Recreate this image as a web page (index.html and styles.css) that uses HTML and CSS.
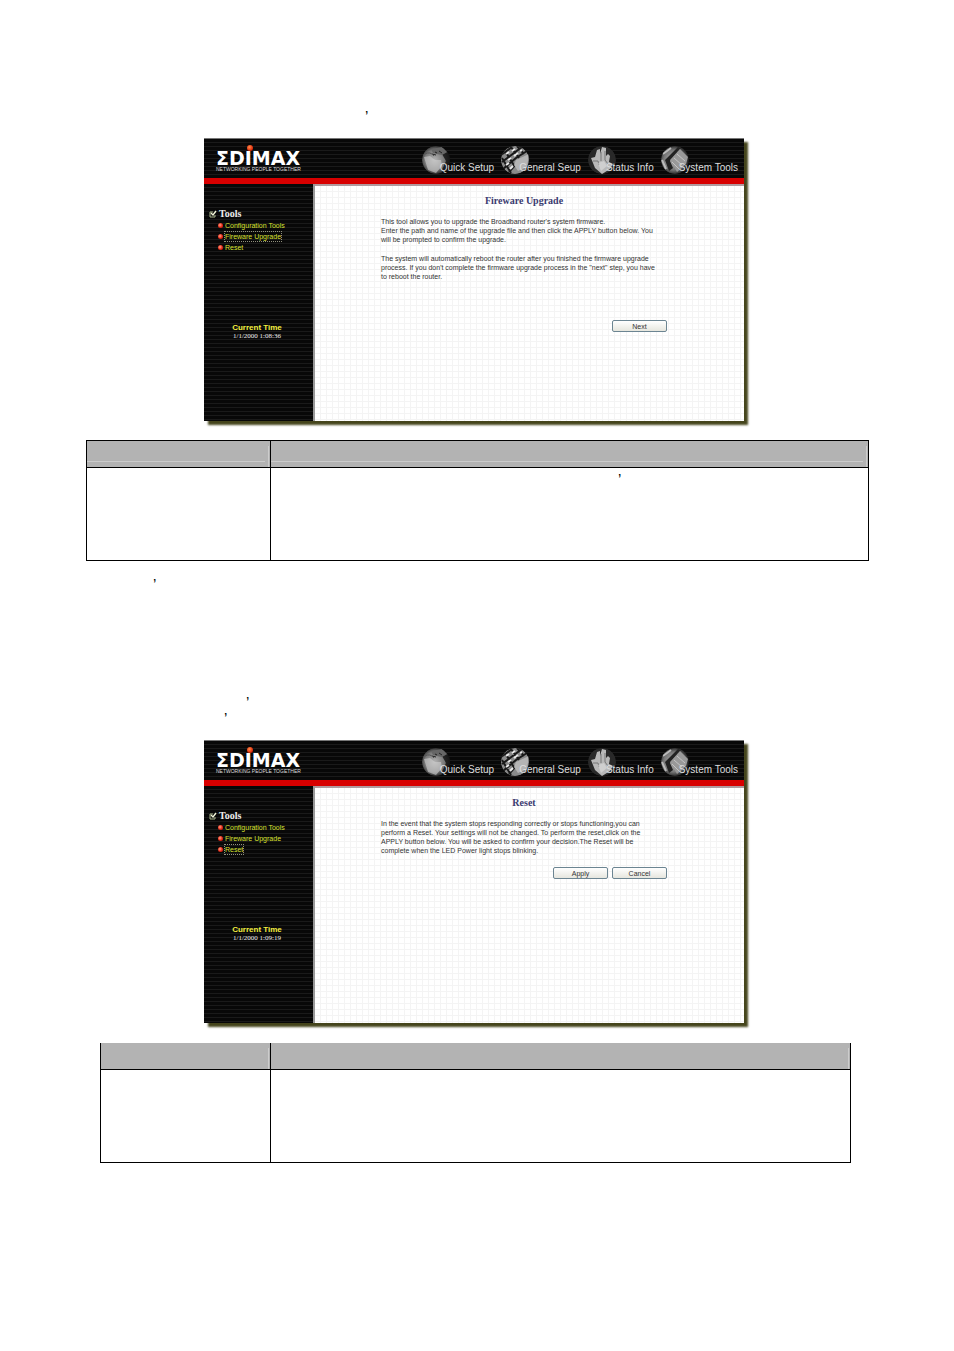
FILE: index.html
```html
<!DOCTYPE html>
<html lang="en">
  <head>
    <meta charset="UTF-8" />
    <meta name="viewport" content="width=device-width, initial-scale=1.0" />
    <title>Fireware Upgrade and Reset</title>
    <link rel="stylesheet" href="styles.css">
  </head>
  <body>
    <!-- shared drawings -->
    <svg class="defs" width="0" height="0" aria-hidden="true">
      <defs>
        <radialGradient id="ball" cx="45%" cy="50%" r="55%">
          <stop offset="0" stop-color="#b4b4b4" />
          <stop offset="0.65" stop-color="#777" />
          <stop offset="1" stop-color="#161616" />
        </radialGradient>
        <clipPath id="ball-clip"><circle cx="14" cy="14" r="14" /></clipPath>
      </defs>
      <symbol id="icon-quick" viewBox="0 0 28 28">
        <g clip-path="url(#ball-clip)">
          <circle cx="14" cy="14" r="14" fill="url(#ball)" />
          <path d="M20 8L28 6L28 28L20 24L24 15Z" fill="#161616" opacity="0.85" />
          <path d="M9 3L20 1L25 6L20 9L15 8L11 7Z" fill="#666" />
          <path d="M13 6L15 7M17 5L20 7M10 8L14 9" stroke="#222" fill="none" />
          <path d="M2 11L8 10L13 14L19 14L20 20L14 27L6 24Z" fill="#d0d0d0" opacity="0.6" />
          <path d="M3 8Q8 5 12 10" stroke="#555" fill="none" />
        </g>
      </symbol>
      <symbol id="icon-general" viewBox="0 0 28 28">
        <g clip-path="url(#ball-clip)">
          <circle cx="14" cy="14" r="14" fill="#8a8a8a" />
          <path d="M0 9L11 1M1 16L21 1M2 23L15 12L26 5M8 26L15 18M4 5L14 21M10 1L18 12M16 0L23 8M1 12L10 27" stroke="#181818" stroke-width="2" fill="none" />
          <path d="M5 8L8 6M11 5L14 3M7 14L10 12M13 10L17 7M5 19L8 17M9 23L12 20M19 5L21 4" stroke="#e8e8e8" stroke-width="2" />
          <path d="M15 14L28 8L26 21L17 25L13 19Z" fill="#b4b4b4" />
        </g>
      </symbol>
      <symbol id="icon-status" viewBox="0 0 28 28">
        <g clip-path="url(#ball-clip)">
          <circle cx="14" cy="14" r="14" fill="#292929" />
          <path d="M5 17L3 12L7 11L9 4L12 3L12 8L14 1L18 2L18 10L20 8L22 10L21 16L25 18L22 23L14 28L7 22Z" fill="#b8b8b8" />
          <path d="M5 15L10 15L11 19M13 6L13 15M17 5L17 14L20 18" stroke="#777" fill="none" />
          <path d="M10 17L16 15L19 20L13 25Z" fill="#ddd" opacity="0.6" />
        </g>
      </symbol>
      <symbol id="icon-system" viewBox="0 0 28 28">
        <g clip-path="url(#ball-clip)">
          <circle cx="14" cy="14" r="14" fill="url(#ball)" />
          <path d="M4 14L17 1L20 2L9 15L12 22L8 25Z" fill="#222" />
          <path d="M9 14L19 3L27 11L25 18L16 26Z" fill="#999" />
          <path d="M13 12L21 19M16 8L24 15M11 16L18 23" stroke="#c4c4c4" />
          <path d="M2 8L10 2M1 14L5 23" stroke="#bbb" stroke-width="2" />
        </g>
      </symbol>
      <symbol id="check" viewBox="0 0 8 8">
        <path d="M6 5V7H1V2H4" fill="none" stroke="#a9b68c" />
        <path d="M2 3L4 5L7 1" fill="none" stroke="#f1f6d8" stroke-width="1.400" />
      </symbol>
    </svg>

    <main class="page">
      <p class="note note-upgrade">’</p>

      <section class="screen">
        <header class="banner">
          <div class="logo">
            <i class="logo-dot"></i>
            <span class="logo-name">ΣDIMAX</span>
            <span class="logo-tag">NETWORKING PEOPLE TOGETHER</span>
          </div>
          <nav class="top-nav">
            <a href="#"><svg><use href="#icon-quick" /></svg><span>Quick Setup</span></a>
            <a href="#"><svg><use href="#icon-general" /></svg><span>General Seup</span></a>
            <a href="#"><svg><use href="#icon-status" /></svg><span>Status Info</span></a>
            <a href="#"><svg><use href="#icon-system" /></svg><span>System Tools</span></a>
          </nav>
        </header>
        <div class="columns">
          <aside class="sidebar">
            <h2><svg><use href="#check" /></svg>Tools</h2>
            <ul>
              <li><a href="#">Configuration Tools</a></li>
              <li><a href="#" class="current">Fireware Upgrade</a></li>
              <li><a href="#">Reset</a></li>
            </ul>
            <div class="clock">
              <strong>Current Time</strong>
              <time>1/1/2000 1:08:36</time>
            </div>
          </aside>
          <div class="content">
            <h1>Fireware Upgrade</h1>
            <p>This tool allows you to upgrade the Broadband router's system firmware.<br>
              Enter the path and name of the upgrade file and then click the APPLY button below. You<br>
              will be prompted to confirm the upgrade.</p>
            <p>The system will automatically reboot the router after you finished the firmware upgrade<br>
              process. If you don't complete the firmware upgrade process in the "next" step, you have<br>
              to reboot the router.</p>
            <div class="buttons buttons-low">
              <button type="button">Next</button>
            </div>
          </div>
        </div>
      </section>

      <table class="params">
        <thead>
          <tr><th class="name"></th><th></th></tr>
        </thead>
        <tbody>
          <tr><td></td><td class="description">’</td></tr>
        </tbody>
      </table>

      <p class="note note-next">’</p>
      <p class="note note-reset">’</p>
      <p class="note note-reset-end">’</p>

      <section class="screen">
        <header class="banner">
          <div class="logo">
            <i class="logo-dot"></i>
            <span class="logo-name">ΣDIMAX</span>
            <span class="logo-tag">NETWORKING PEOPLE TOGETHER</span>
          </div>
          <nav class="top-nav">
            <a href="#"><svg><use href="#icon-quick" /></svg><span>Quick Setup</span></a>
            <a href="#"><svg><use href="#icon-general" /></svg><span>General Seup</span></a>
            <a href="#"><svg><use href="#icon-status" /></svg><span>Status Info</span></a>
            <a href="#"><svg><use href="#icon-system" /></svg><span>System Tools</span></a>
          </nav>
        </header>
        <div class="columns">
          <aside class="sidebar">
            <h2><svg><use href="#check" /></svg>Tools</h2>
            <ul>
              <li><a href="#">Configuration Tools</a></li>
              <li><a href="#">Fireware Upgrade</a></li>
              <li><a href="#" class="current">Reset</a></li>
            </ul>
            <div class="clock">
              <strong>Current Time</strong>
              <time>1/1/2000 1:09:19</time>
            </div>
          </aside>
          <div class="content">
            <h1>Reset</h1>
            <p>In the event that the system stops responding correctly or stops functioning,you can<br>
              perform a Reset. Your settings will not be changed. To perform the reset,click on the<br>
              APPLY button below. You will be asked to confirm your decision.The Reset will be<br>
              complete when the LED Power light stops blinking.</p>
            <div class="buttons">
              <button type="button">Apply</button>
              <button type="button">Cancel</button>
            </div>
          </div>
        </div>
      </section>

      <table class="params params-reset">
        <thead>
          <tr><th class="name"></th><th></th></tr>
        </thead>
        <tbody>
          <tr><td></td><td></td></tr>
        </tbody>
      </table>
    </main>
  </body>
</html>
```
FILE: styles.css
```css
body {
  margin: 0;
  background: #fff;
  color: #000;
  font-family: "Liberation Sans", Arial, sans-serif;
}

.defs {
  position: absolute;
}

.page {
  padding: 108px 85px 100px 86px;
}

/* manual text */
.note {
  margin: 0;
  font-size: 15px;
  line-height: 16px;
}

.note-upgrade {
  padding-left: 279px;
}

.note-next {
  margin-top: 15px;
  padding-left: 67px;
}

.note-reset {
  margin-top: 102px;
  padding-left: 160px;
}

.note-reset-end {
  padding-left: 138px;
}

/* router screens */
.screen {
  max-width: 540px;
  margin: 14px 125px 0 118px;
  box-shadow: 4px 4px 2px #45451c;
}

.banner {
  display: flex;
  justify-content: space-between;
  height: 39px;
  padding: 0 6px 0 12px;
  border-top: 1px solid #777;
  border-bottom: 6px solid #d80000;
  background: repeating-linear-gradient(#080808 0 3px, #1a1a1a 3px 4px);
}

.logo {
  display: flex;
  flex-direction: column;
  padding-top: 6px;
  white-space: nowrap;
}

.logo-dot {
  width: 6px;
  height: 6px;
  margin-left: 31px;
  border-radius: 50%;
  background: radial-gradient(circle at 40% 35%, #ff8a4a, #d81c00 75%);
}

.logo-name {
  color: #fff;
  font: bold 19px/14px "DejaVu Sans", sans-serif;
}

.logo-tag {
  margin-top: 1px;
  color: #ddd;
  font-size: 5px;
  line-height: 6px;
}

.top-nav {
  display: flex;
  gap: 7px;
  padding-top: 7px;
}

.top-nav a {
  display: flex;
  height: 28px;
  color: #ddd;
  font-size: 10px;
  line-height: 12px;
  text-decoration: none;
  white-space: nowrap;
}

.top-nav svg {
  width: 28px;
  height: 28px;
}

.top-nav span {
  align-self: flex-end;
  margin-left: -10px;
}

.columns {
  display: flex;
  min-height: 237px;
}

.sidebar {
  flex: 0 0 109px;
  border-right: 2px solid #999;
  background: repeating-linear-gradient(#080808 0 3px, #1a1a1a 3px 4px);
}

.sidebar h2 {
  display: flex;
  align-items: center;
  gap: 2px;
  margin: 24px 0 0 5px;
  color: #eee;
  font: bold 10px/12px "Liberation Serif", serif;
}

.sidebar h2 svg {
  width: 8px;
  height: 8px;
}

.sidebar ul {
  margin: 0;
  padding: 0 0 0 14px;
  list-style: none;
}

.sidebar li {
  display: flex;
  align-items: center;
  gap: 2px;
  height: 11px;
}

.sidebar li::before {
  content: "";
  width: 5px;
  height: 5px;
  border-radius: 50%;
  background: radial-gradient(circle at 40% 40%, #ffa080, #e02010 60%);
}

.sidebar li a {
  color: #d8e030;
  font-size: 7px;
  line-height: 9px;
  text-decoration: none;
}

.sidebar li .current {
  outline: 1px dotted #90907c;
}

.clock {
  margin-top: 70px;
  padding-right: 3px;
  color: #eee;
  font: 7px/9px "Liberation Serif", serif;
  text-align: center;
}

.clock strong,
.clock time {
  display: block;
}

.clock strong {
  color: #f4f040;
  font: bold 8px/9px "Liberation Sans", sans-serif;
}

.content {
  flex: 1;
  padding: 0 77px 0 66px;
  border-top: 2px solid #b09a9e;
  background:
    repeating-linear-gradient(90deg, transparent 0 5px, #f4f4f4 5px 6px),
    repeating-linear-gradient(#fff 0 5px, #f4f4f4 5px 6px);
  color: #333;
  font-size: 7px;
  line-height: 9px;
}

.content h1 {
  margin: 9px 0 10px;
  color: #3b3b70;
  font: bold 10px/12px "Liberation Serif", serif;
  text-align: center;
}

.content p {
  margin: 0 0 10px;
  white-space: nowrap;
}

.buttons {
  display: flex;
  justify-content: flex-end;
  gap: 4px;
  margin-top: 12px;
}

.buttons-low {
  margin-top: 39px;
}

.buttons button {
  width: 55px;
  height: 12px;
  padding: 0;
  border: 1px solid #6c8592;
  border-radius: 2px;
  background: linear-gradient(#fff, #e6e6de);
  color: #333;
  font: 7px/9px "Liberation Sans", sans-serif;
}

/* parameter tables */
.params {
  width: 100%;
  margin-top: 19px;
  border-collapse: collapse;
  table-layout: fixed;
}

.params th,
.params td {
  box-sizing: border-box;
  padding: 0;
  border: 1px solid #000;
}

.params th {
  height: 27px;
  background:
    linear-gradient(#ccc, #ccc) left 0 bottom 5px / calc(100% - 5px) 1px no-repeat,
    linear-gradient(#ccc, #ccc) right 1px bottom 0 / 1px 21px no-repeat,
    #b3b3b3;
}

.params .name {
  width: 184px;
}

.params td {
  height: 93px;
  font-size: 15px;
  line-height: 16px;
  vertical-align: top;
}

.params .description {
  padding: 3px 0 0 347px;
}

.params-reset {
  width: calc(100% - 32px);
  margin: 20px 18px 0 14px;
}

.params-reset th {
  height: 26px;
  border-top: 0;
  background: linear-gradient(#ccc, #ccc) right 1px bottom 0 / 1px 21px no-repeat, #b3b3b3;
}

.params-reset .name {
  width: 170px;
}
```
